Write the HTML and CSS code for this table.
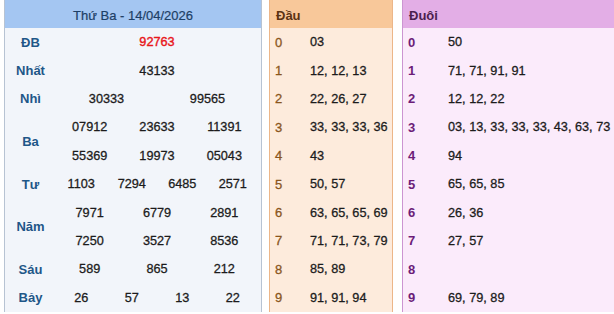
FILE: index.html
```html
<!DOCTYPE html>
<html lang="vi">
<head>
<meta charset="utf-8">
<link rel="stylesheet" href="styles.css">
</head>
<body>
<div class="wrap">
  <div class="results">
    <div class="results-head">Thứ Ba - 14/04/2026</div>
    <div class="prize"><div class="label">ĐB</div><div class="nums"><div class="line"><span class="special">92763</span></div></div></div>
    <div class="prize"><div class="label">Nhất</div><div class="nums"><div class="line"><span>43133</span></div></div></div>
    <div class="prize"><div class="label">Nhì</div><div class="nums"><div class="line"><span>30333</span><span>99565</span></div></div></div>
    <div class="prize"><div class="label">Ba</div><div class="nums">
      <div class="line"><span>07912</span><span>23633</span><span>11391</span></div>
      <div class="line"><span>55369</span><span>19973</span><span>05043</span></div>
    </div></div>
    <div class="prize"><div class="label">Tư</div><div class="nums"><div class="line"><span>1103</span><span>7294</span><span>6485</span><span>2571</span></div></div></div>
    <div class="prize"><div class="label">Năm</div><div class="nums">
      <div class="line"><span>7971</span><span>6779</span><span>2891</span></div>
      <div class="line"><span>7250</span><span>3527</span><span>8536</span></div>
    </div></div>
    <div class="prize"><div class="label">Sáu</div><div class="nums"><div class="line"><span>589</span><span>865</span><span>212</span></div></div></div>
    <div class="prize"><div class="label">Bảy</div><div class="nums"><div class="line"><span>26</span><span>57</span><span>13</span><span>22</span></div></div></div>
  </div>

  <div class="loto loto-head">
    <div class="loto-title">Đầu</div>
    <div class="loto-row"><span class="idx">0</span><span class="val">03</span></div>
    <div class="loto-row"><span class="idx">1</span><span class="val">12, 12, 13</span></div>
    <div class="loto-row"><span class="idx">2</span><span class="val">22, 26, 27</span></div>
    <div class="loto-row"><span class="idx">3</span><span class="val">33, 33, 33, 36</span></div>
    <div class="loto-row"><span class="idx">4</span><span class="val">43</span></div>
    <div class="loto-row"><span class="idx">5</span><span class="val">50, 57</span></div>
    <div class="loto-row"><span class="idx">6</span><span class="val">63, 65, 65, 69</span></div>
    <div class="loto-row"><span class="idx">7</span><span class="val">71, 71, 73, 79</span></div>
    <div class="loto-row"><span class="idx">8</span><span class="val">85, 89</span></div>
    <div class="loto-row"><span class="idx">9</span><span class="val">91, 91, 94</span></div>
  </div>

  <div class="loto loto-tail">
    <div class="loto-title">Đuôi</div>
    <div class="loto-row"><span class="idx">0</span><span class="val">50</span></div>
    <div class="loto-row"><span class="idx">1</span><span class="val">71, 71, 91, 91</span></div>
    <div class="loto-row"><span class="idx">2</span><span class="val">12, 12, 22</span></div>
    <div class="loto-row"><span class="idx">3</span><span class="val">03, 13, 33, 33, 33, 43, 63, 73</span></div>
    <div class="loto-row"><span class="idx">4</span><span class="val">94</span></div>
    <div class="loto-row"><span class="idx">5</span><span class="val">65, 65, 85</span></div>
    <div class="loto-row"><span class="idx">6</span><span class="val">26, 36</span></div>
    <div class="loto-row"><span class="idx">7</span><span class="val">27, 57</span></div>
    <div class="loto-row"><span class="idx">8</span><span class="val"></span></div>
    <div class="loto-row"><span class="idx">9</span><span class="val">69, 79, 89</span></div>
  </div>
</div>
</body>
</html>
```

FILE: styles.css
```css
html, body {
  margin: 0;
  padding: 0;
  background: #ffffff;
}

body {
  font-family: "Liberation Sans", Arial, sans-serif;
  font-size: 13px;
  color: #1c1c1c;
}

.wrap {
  display: flex;
  align-items: flex-start;
  padding-left: 4px;
  height: 314px;
  overflow: hidden;
}

/* Results table */
.results {
  width: 256px;
  flex: none;
  border-left: 1px solid #b7c3d3;
  border-right: 1px solid #b7c3d3;
  background: #f2f5fa;
}

.results-head {
  height: 24px;
  padding-top: 4px;
  line-height: 24px;
  text-align: center;
  background: #a4c6f2;
  color: #1d3f66;
  -webkit-text-stroke: 0.2px #1d3f66;
}

.prize {
  display: flex;
}

.label {
  width: 51px;
  flex: none;
  display: flex;
  align-items: center;
  justify-content: center;
  font-weight: bold;
  color: #1f5788;
}

.nums {
  flex: 1;
  padding-right: 3px;
}

.line {
  height: 28.4px;
  display: grid;
  grid-auto-flow: column;
  grid-auto-columns: 1fr;
  align-items: center;
  justify-items: center;
  font-size: 12.7px;
  color: #1c1c1c;
  -webkit-text-stroke: 0.3px #1c1c1c;
}

.special {
  color: #e8161b;
  -webkit-text-stroke: 0.4px #e8161b;
}

/* Loto tables */
.loto {
  flex: none;
}

.loto-head {
  width: 122px;
  margin-left: 7px;
  border-left: 1px solid #ecb689;
  border-right: 1px solid #ecb689;
  background: #fdebdc;
}

.loto-tail {
  flex: 1;
  margin-left: 9px;
  border-left: 1px solid #cc95d2;
  background: #fbebfb;
}

.loto-title {
  height: 24px;
  padding-top: 4px;
  line-height: 24px;
  padding-left: 6px;
  font-weight: bold;
}

.loto-head .loto-title {
  background: #f8c89a;
  color: #5b3313;
}

.loto-tail .loto-title {
  background: #e3aee6;
  color: #4b1f4e;
}

.loto-row {
  height: 28.4px;
  display: flex;
  align-items: center;
  white-space: nowrap;
}

.idx {
  flex: none;
}

.val {
  font-size: 12.7px;
  color: #1c1c1c;
  -webkit-text-stroke: 0.3px #1c1c1c;
}

.loto-head .idx {
  width: 35px;
  padding-left: 5px;
  color: #8a561d;
  -webkit-text-stroke: 0.3px #8a561d;
}

.loto-tail .idx {
  width: 40px;
  padding-left: 5px;
  font-weight: bold;
  color: #6c1d78;
}
```
